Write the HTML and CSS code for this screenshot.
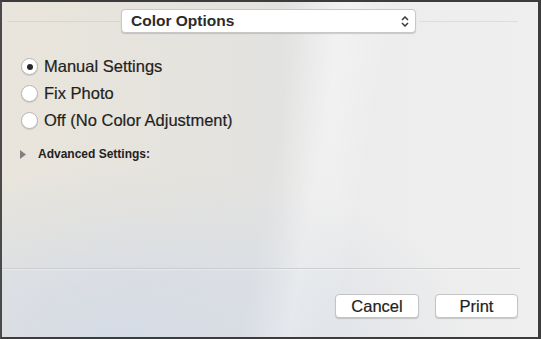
FILE: index.html
```html
<!DOCTYPE html>
<html>
<head>
<meta charset="utf-8">
<link rel="stylesheet" href="styles.css">
</head>
<body>
<div class="frame">
  <div class="top">
    <div class="rule"></div>
    <div class="popup">
      <span class="popup-label">Color Options</span>
      <svg class="chev" width="8" height="11" viewBox="0 0 8 11"><path d="M1 4 L4 1 L7 4 M1 7 L4 10 L7 7" fill="none" stroke="#3a3a3a" stroke-width="1.5"/></svg>
    </div>
    <div class="rule short"></div>
  </div>
  <div class="options">
    <label class="radio-row"><span class="radio on"></span><span>Manual Settings</span></label>
    <label class="radio-row"><span class="radio"></span><span>Fix Photo</span></label>
    <label class="radio-row"><span class="radio"></span><span>Off (No Color Adjustment)</span></label>
  </div>
  <div class="advanced">
    <svg class="tri" width="6" height="9" viewBox="0 0 6 9"><path d="M0 0 L6 4.5 L0 9 Z" fill="#808080"/></svg>
    <span>Advanced Settings:</span>
  </div>
  <div class="spacer"></div>
  <div class="sep"></div>
  <div class="buttons">
    <button class="btn cancel">Cancel</button>
    <button class="btn print">Print</button>
  </div>
</div>
</body>
</html>
```
FILE: styles.css
```css
html, body { margin: 0; padding: 0; }
body {
  width: 541px; height: 339px; overflow: hidden;
  font-family: "Liberation Sans", Arial, sans-serif;
  color: #1e1e1e;
}
.frame {
  box-sizing: border-box;
  width: 541px; height: 339px;
  border-top: 2px solid #3c3c3c;
  border-left: 2px solid #4a4a4a;
  border-right: 3px solid #3c3c3c;
  border-bottom: 2px solid #3c3c3c;
  display: flex; flex-direction: column;
  background:
    linear-gradient(100deg, rgba(255,255,255,0) 50%, rgba(255,255,255,0.3) 58%, rgba(255,255,255,0) 66%),
    radial-gradient(ellipse 360px 170px at 22% 100%, rgba(212,219,230,0.95) 0%, rgba(212,219,230,0.6) 45%, rgba(212,219,230,0) 100%),
    linear-gradient(90deg, #e9e5dc 0%, #e5e3de 35%, #e2e2e1 52%, #ececec 62%, #efefef 100%);
}
.top {
  display: flex; align-items: center;
  padding: 7px 0 0 5px; height: 24px;
}
.rule { height: 1px; background: #d8d5cf; width: 113px; margin-right: 1px; }
.rule.short { width: 99px; margin: 0 0 0 3px; background: #dddddd; }
.popup {
  box-sizing: border-box;
  width: 295px; height: 24px;
  background: #fff;
  border: 1px solid #c8c8c8; border-radius: 4px;
  box-shadow: 0 1px 1px rgba(0,0,0,0.16);
  display: flex; align-items: center; justify-content: space-between;
  padding: 0 6px 0 9px;
}
.popup-label { font-size: 15.5px; font-weight: bold; color: #2b2b2b; }
.chev { display: block; }
.options {
  display: flex; flex-direction: column; gap: 10px;
  padding: 25px 0 0 19px;
}
.radio-row {
  display: flex; align-items: center; gap: 6px; font-size: 16.5px; height: 17px; color: #1f1f1f;
  -webkit-text-stroke: 0.2px #1f1f1f;
}
.radio {
  box-sizing: border-box; width: 17px; height: 17px; border-radius: 50%;
  background: #fff; border: 1px solid #b6b6b6;
  box-shadow: 0 1px 1px rgba(0,0,0,0.12);
  display: flex; align-items: center; justify-content: center;
  flex: none;
}
.radio.on::after { content: ""; width: 6px; height: 6px; border-radius: 50%; background: #2a2a2a; }
.advanced {
  display: flex; align-items: center; gap: 12px; height: 14px;
  padding: 18px 0 0 18px; font-size: 12px; font-weight: bold; color: #222;
}
.tri { display: block; }
.spacer { flex: 1; }
.sep { height: 1px; background: #cbcdd0; margin-right: 18px; box-shadow: 0 1px 0 rgba(255,255,255,0.35); }
.buttons {
  display: flex; justify-content: flex-end; gap: 16px;
  padding: 25px 20px 19px 0;
}
.btn {
  box-sizing: border-box; width: 84px; height: 24px;
  background: #fff; border: 1px solid #c4c4c4; border-radius: 4px;
  box-shadow: 0 1px 1px rgba(0,0,0,0.16);
  font-family: "Liberation Sans", Arial, sans-serif; font-size: 16.5px; color: #222;
  -webkit-text-stroke: 0.2px #222;
  padding: 0;
}
.print { width: 83px; }
```
